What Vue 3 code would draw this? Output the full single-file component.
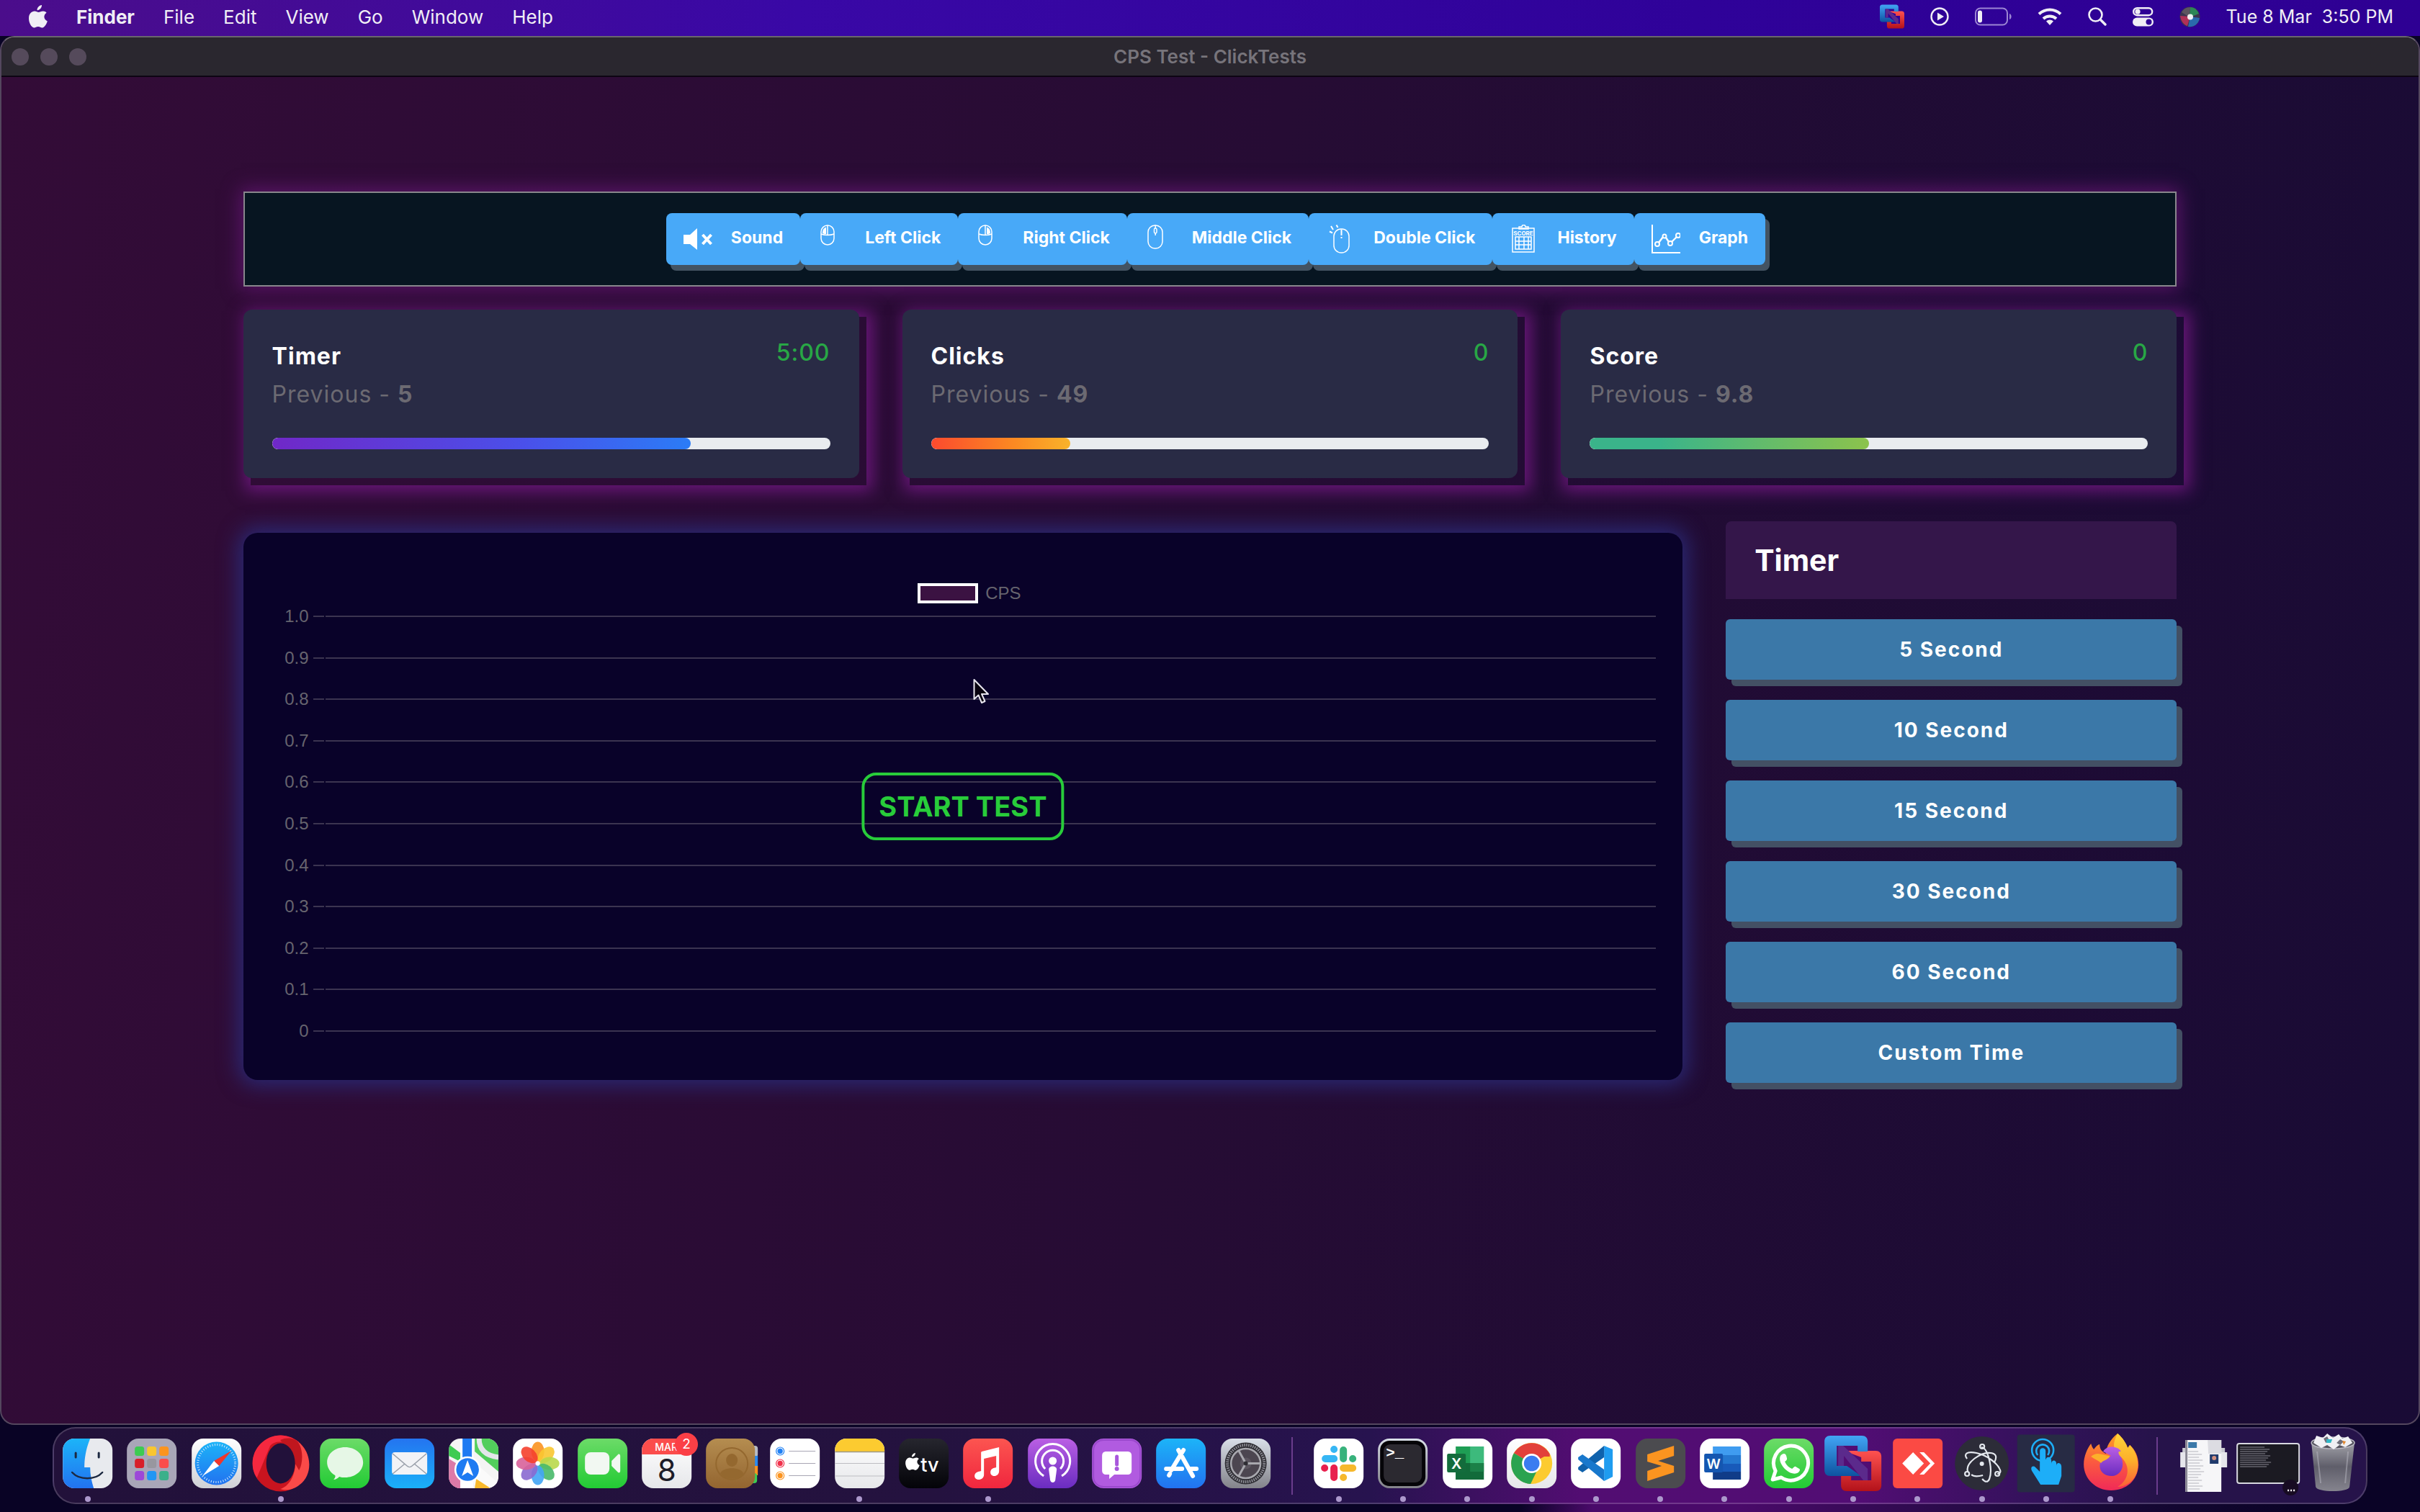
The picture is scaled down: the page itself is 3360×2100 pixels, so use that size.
<template>
  <div class="desktop">
    <svg class="defs" width="0" height="0" aria-hidden="true" v-html="defs"></svg>

    <header class="menubar">
      <nav class="menus">
        <button class="apple" aria-label="Apple menu">
          <svg width="26" height="32" viewBox="0 0 26 32" fill="#f0eef5" v-html="applePath"></svg>
        </button>
        <button v-for="(m, i) in menus" :key="m" :class="{ strong: i === 0 }">{{ m }}</button>
      </nav>
      <div class="status">
        <svg width="34" height="34" viewBox="-5 -5 79 79" v-html="icons.vmware"></svg>
        <svg width="26" height="26" viewBox="0 0 26 26">
          <circle cx="13" cy="13" r="11.5" fill="none" stroke="#f0eef5" stroke-width="2.4" />
          <path d="M10 7.5v11l9-5.5z" fill="#f0eef5" />
        </svg>
        <svg width="51" height="26" viewBox="0 0 51 26">
          <rect x="1" y="1.500" width="44" height="23" rx="6.500" fill="none" stroke="#9c86d3" stroke-width="2" />
          <rect x="4" y="4.500" width="6" height="17" rx="3" fill="#f0eef5" />
          <path d="M48 9c3.500 1 3.500 7 0 8z" fill="#9c86d3" />
        </svg>
        <svg width="34" height="26" viewBox="0 0 34 26" fill="none" stroke="#f0eef5" stroke-width="4">
          <path d="M2 9.500a21.500 21.500 0 0 1 30 0" />
          <path d="M8 16a13 13 0 0 1 18 0" />
          <path d="M17 25l-5-5.500a7.500 7.500 0 0 1 10 0z" fill="#f0eef5" stroke="none" />
        </svg>
        <svg width="26" height="26" viewBox="0 0 26 26" fill="none" stroke="#f0eef5" stroke-linecap="round">
          <circle cx="10.500" cy="10.500" r="9" stroke-width="2.600" />
          <path d="M17.500 17.500l6.500 6.500" stroke-width="3.400" />
        </svg>
        <svg width="29" height="28" viewBox="0 0 29 28">
          <rect x="1.200" y="2.200" width="26" height="10" rx="5" fill="none" stroke="#f0eef5" stroke-width="2.400" />
          <circle cx="7" cy="7.200" r="3.600" fill="#f0eef5" />
          <rect x="0" y="15.500" width="29" height="12" rx="6" fill="#f0eef5" />
          <circle cx="22.500" cy="21.500" r="4" fill="#2f0096" />
        </svg>
        <svg width="29" height="29" viewBox="0 0 29 29">
          <circle cx="14.500" cy="14.500" r="14" fill="#3a3450" />
          <path d="M3 8a13.500 13.500 0 0 1 12-7l-1 14z" fill="#5c5460" />
          <path d="M15 1a13.500 13.500 0 0 1 12 9l-13 5z" fill="#2c8656" />
          <path d="M1 13c1 8 6 13 10 14l4-13z" fill="#b03058" />
          <path d="M12 28c8 1 15-4 16-12l-13-2z" fill="#2a6aac" />
          <circle cx="15" cy="14.500" r="4" fill="#ffffff" opacity="0.9" />
        </svg>
        <div class="clock"><span>Tue 8 Mar</span><span>3:50 PM</span></div>
      </div>
    </header>

    <section class="window">
      <div class="titlebar">
        <div class="lights">
          <button aria-label="Close"></button>
          <button aria-label="Minimize"></button>
          <button aria-label="Zoom"></button>
        </div>
        <h1>CPS Test - ClickTests</h1>
      </div>

      <main class="content">
        <div class="toolbar">
          <button v-for="t in tools" :key="t.label" class="tool">
            <svg width="40" height="40" viewBox="0 0 40 40" v-html="t.icon"></svg>
            <span>{{ t.label }}</span>
          </button>
        </div>

        <div class="grid">
          <div v-for="s in stats" :key="s.name" class="glow">
            <article class="card">
              <div class="card-head">
                <h2>{{ s.name }}</h2>
                <span class="value">{{ s.value }}</span>
              </div>
              <p>Previous - <b>{{ s.previous }}</b></p>
              <div class="track" role="progressbar" :aria-valuenow="s.percent">
                <div class="fill" :class="s.tone" :style="{ width: s.percent + '%' }"></div>
              </div>
            </article>
          </div>
        </div>

        <div class="grid lower">
          <section class="chart">
            <div class="legend"><i></i>CPS</div>
            <div class="plot">
              <div v-for="n in ticks" :key="n" class="row">
                <span>{{ n }}</span>
                <i class="tick"></i>
                <i class="line"></i>
              </div>
            </div>
            <button class="start">START TEST</button>
            <svg class="pointer" width="24" height="36" viewBox="0 0 24 36">
              <path d="M1.500 2v27l6-5.500 4.500 10.500 4.500-2-4.500-10h9z" fill="#08020f" stroke="#e8e6ee" stroke-width="2" stroke-linejoin="round" />
            </svg>
          </section>

          <aside class="side">
            <h2>Timer</h2>
            <button v-for="d in durations" :key="d">{{ d }}</button>
          </aside>
        </div>
      </main>
    </section>

    <footer class="dock-area">
      <div class="dock">
        <template v-for="(group, g) in dock" :key="g">
          <span v-if="g" class="sep"></span>
          <button v-for="app in group" :key="app.name" class="app" :aria-label="app.name">
            <svg viewBox="-10 -10 89 89" v-html="icons[app.name]"></svg>
            <span v-if="app.badge" class="badge">{{ app.badge }}</span>
            <i v-if="app.open" class="dot"></i>
          </button>
        </template>
      </div>
    </footer>
  </div>
</template>

<script setup>
const menus = ['Finder', 'File', 'Edit', 'View', 'Go', 'Window', 'Help']

const applePath = '<path d="M18 0c.4 3.600-3 7.400-6.400 7.200C11.200 3.800 14.600.4 18 0zM24.600 10.800c-4.800 3-4 9.400 1.200 11.600-1.200 3.600-4 8.800-7 9-2.400.2-3-1.400-5.800-1.400s-3.600 1.400-5.800 1.400C3.400 31 0 24.200 0 18.400 0 12 4 8.600 8 8.600c2.400 0 4 1.400 5.600 1.400 1.400 0 3.600-1.600 6.400-1.600 1.600 0 3.600.8 4.600 2.400z"/>'

// toolbar
const mouse = (body) => `<g fill="none" stroke="#fff" stroke-width="1.500">${body}</g>`
const tools = [
  {
    label: 'Sound',
    icon: '<path d="M0 14h9L19 5v30L9 27H0z" fill="#fff"/><path d="M26.500 14l12 13m0-13l-12 13" stroke="#fff" stroke-width="4"/>',
  },
  {
    label: 'Left Click',
    icon: mouse('<rect x="5" y="1" width="18" height="27" rx="9"/><path d="M5 13c5 2 13 2 18 0M14 1v13"/><path d="M12 3.500C8 5 7 8 7 12c2 1 3 1 5 1z" fill="#fff" stroke="none"/>'),
  },
  {
    label: 'Right Click',
    icon: mouse('<rect x="5" y="1" width="18" height="27" rx="9"/><path d="M5 13c5 2 13 2 18 0M14 1v13"/><path d="M16 3.500c4 1.500 5 4.500 5 8.500-2 1-3 1-5 1z" fill="#fff" stroke="none"/>'),
  },
  {
    label: 'Middle Click',
    icon: mouse('<rect x="5" y="1" width="20" height="32" rx="9.500"/><rect x="13.500" y="5" width="3.500" height="7" rx="1.700"/><path d="M15.200 1v4m0 7v3"/>'),
  },
  {
    label: 'Double Click',
    icon: mouse('<rect x="11" y="6" width="21" height="33" rx="10"/><path d="M21.500 7v8m0 2v2M7 2l3 5M14.500 0.500l2 3.500M5 9.500l4 2" stroke-width="2"/>'),
  },
  {
    label: 'History',
    icon: mouse('<path d="M4 5h30v33H4zM13 5V3h4a2.500 2.500 0 0 1 5 0h4v3H13zM8 17h22v17H8zM8 23h22M8 28h22M13 17v17M20 17v17M26 17v17"/><text x="19" y="14.500" text-anchor="middle" font-family="Inter,sans-serif" font-size="8" font-weight="700" fill="#fff" stroke="none">SCORE</text>'),
  },
  {
    label: 'Graph',
    icon: '<g fill="none" stroke="#fff" stroke-width="2"><path d="M1 0v39h39"/><path d="M10 25l6-8M20 18l4 6M28 24l7-7" stroke-width="2.400"/><circle cx="8" cy="27" r="3"/><circle cx="18" cy="16" r="2.500"/><circle cx="26" cy="26" r="3"/><circle cx="37" cy="15" r="3"/></g>',
  },
]

const stats = [
  { name: 'Timer', value: '5:00', previous: '5', percent: 75, tone: 'violet' },
  { name: 'Clicks', value: '0', previous: '49', percent: 25, tone: 'orange' },
  { name: 'Score', value: '0', previous: '9.8', percent: 50, tone: 'green' },
]

const ticks = ['1.0', '0.9', '0.8', '0.7', '0.6', '0.5', '0.4', '0.3', '0.2', '0.1', '0']
const durations = ['5 Second', '10 Second', '15 Second', '30 Second', '60 Second', 'Custom Time']

// dock
const dock = [
  [
    { name: 'finder', open: true }, { name: 'launchpad' }, { name: 'safari' },
    { name: 'opera', open: true }, { name: 'messages' }, { name: 'mail' },
    { name: 'maps' }, { name: 'photos' }, { name: 'facetime' },
    { name: 'calendar', badge: 2 }, { name: 'contacts' }, { name: 'reminders' },
    { name: 'notes', open: true }, { name: 'tv' }, { name: 'music', open: true },
    { name: 'podcasts' }, { name: 'feedback' }, { name: 'appstore' }, { name: 'settings' },
  ],
  [
    { name: 'slack', open: true }, { name: 'terminal', open: true }, { name: 'excel', open: true },
    { name: 'chrome', open: true }, { name: 'vscode', open: true }, { name: 'sublime', open: true },
    { name: 'word', open: true }, { name: 'whatsapp', open: true }, { name: 'vmware', open: true },
    { name: 'anydesk', open: true }, { name: 'electron', open: true }, { name: 'clicktests', open: true },
    { name: 'firefox', open: true },
  ],
  [{ name: 'document' }, { name: 'minimized' }, { name: 'trash' }],
]

const grad = (id, ...colors) =>
  `<linearGradient id="${id}" x1="0" y1="0" x2="0" y2="1">${colors
    .map((c, i) => `<stop offset="${i / (colors.length - 1)}" stop-color="${c}"/>`)
    .join('')}</linearGradient>`

const defs = `<defs>
  ${grad('gBlue', '#1cb4f8', '#2272f0')}
  ${grad('gMail', '#2474f0', '#1ab0f8')}
  ${grad('gGreen', '#6cdb68', '#22cb34')}
  ${grad('gWhite', '#ffffff', '#cfd0d6')}
  ${grad('gPaper', '#ffffff', '#e6e7ea')}
  ${grad('gRed', '#fc5550', '#f0263e')}
  ${grad('gPurple', '#ba5fe4', '#6a2cc0')}
  ${grad('gBlack', '#26262e', '#030308')}
  ${grad('gGray', '#d9dfe8', '#83838a')}
  ${grad('gBrown', '#b58d50', '#936530')}
  ${grad('gVmB', '#42a5f5', '#0d53a0')}
  ${grad('gVmR', '#ff5250', '#b3121a')}
  ${grad('gFox', '#fca420', '#fb5a40', '#f02a58')}
  ${grad('gFlame', '#ffd43a', '#fcb02a', '#fb6038')}
  ${grad('gTrash', '#a3a3aa', '#5f5e6a', '#85848e')}
  <clipPath id="tile"><rect width="69" height="69" rx="16"/></clipPath>
</defs>`

const tile = (fill) => `<rect width="69" height="69" rx="16" fill="${fill}"/>`
const repeat = (n, fn) => Array.from({ length: n }, (_, i) => fn(i)).join('')

const padColors = ['#3dcb52', '#f9c631', '#fb9420', '#d81f2a', '#98979f', '#fb4d4c', '#9c48d8', '#2196f3', '#3bb08a']
const petals = ['#fb9420', '#f9c631', '#b9d84a', '#48b96a', '#42a5f5', '#8a6ad0', '#d8629a', '#f5402e']

const icons = {
  finder: `${tile('#e8eaee')}<g clip-path="url(#tile)"><path d="M0 0h38c-5 12-8 26-8 40h8c0 10 2 20 5 29H0z" fill="url(#gBlue)"/></g>
    <path d="M18 20v6M50 20v6" stroke="#1c2840" stroke-width="3" stroke-linecap="round"/><path d="M13 47c10 11 32 11 42 0" fill="none" stroke="#1c2840" stroke-width="2.500" stroke-linecap="round"/>`,
  launchpad: `${tile('#a9a6b8')}${repeat(9, (i) => `<rect x="${11 + (i % 3) * 17}" y="${11 + Math.floor(i / 3) * 17}" width="13" height="13" rx="3.500" fill="${padColors[i]}"/>`)}`,
  safari: `${tile('url(#gWhite)')}<circle cx="34.500" cy="34.500" r="30" fill="url(#gBlue)"/><circle cx="34.500" cy="34.500" r="26" fill="none" stroke="#cfe8fb" stroke-width="3" stroke-dasharray="1 2.400"/>
    <path d="M55 17L38 38l-7-7z" fill="#f0362c"/><path d="M15 52l16-21 7 7z" fill="#fff"/>`,
  opera: `<ellipse cx="34.500" cy="34.500" rx="39" ry="39" fill="#c8141f"/><path d="M34.500-4.500C13-4.500-4.500 13-4.500 34.500c0 8 2 14 6 20L20 10C26 3 40 2 50 12L60 5C52-1 44-4.500 34.500-4.500z" fill="#f5283f"/>
    <path d="M58 4c20 14 22 46 3 60-8 7-20 9-27 6 22-6 30-50 8-66z" fill="#fb4a48"/><path d="M34 2c10-5 20-2 24 2 8 10 8 30 2 40L40 10z" fill="#c0161e"/><ellipse cx="34.500" cy="34.500" rx="20" ry="28" fill="#22113a"/>`,
  messages: `${tile('url(#gGreen)')}<path d="M35 12c14 0 25 9 25 21S49 54 35 54c-3 0-6 0-8-1-2 2-5 4-8 4 2-2 3-4 2-6-7-4-11-11-11-18 0-12 11-21 25-21z" fill="#e6f7e6"/>`,
  mail: `${tile('url(#gMail)')}<rect x="10" y="19" width="49" height="31" rx="4" fill="#f2f3f6"/><path d="M11 21l20 17c2 2 5 2 7 0l20-17M11 49l17-14M58 49L41 35" fill="none" stroke="#9aa0aa" stroke-width="1.500"/>`,
  maps: `<g clip-path="url(#tile)"><rect width="69" height="69" fill="#f4f4f4"/><path d="M36 0h33v46L36 18z" fill="#52ce5c"/><path d="M0 8l16 12v12L0 24z" fill="#3dcb52"/><path d="M0 28l16 10v31H0z" fill="#dc7aa8"/>
    <path d="M42 0c0 16 10 24 27 26" fill="none" stroke="#e4e6ea" stroke-width="7"/><path d="M16 0h18v69H16z" fill="#fff"/><path d="M19 0h13v34H19z" fill="#1f7bf2"/><path d="M32 30l37 32v7H40l-8-10z" fill="#fafafa"/><path d="M38 56l20 13H36z" fill="#f9b92c"/><path d="M0 69V52l14 17z" fill="#dc7aa8"/></g>
    <circle cx="26" cy="43" r="17" fill="#1f7bf2" stroke="#fff" stroke-width="2.500"/><path d="M26 30l8 22-8-5-8 5z" fill="#fff"/>`,
  photos: `${tile('#ffffff')}${repeat(8, (i) => `<ellipse cx="34.500" cy="18" rx="9" ry="13.500" fill="${petals[i]}" opacity="0.9" transform="rotate(${i * 45} 34.500 34.500)"/>`)}`,
  facetime: `${tile('url(#gGreen)')}<rect x="10" y="19" width="34" height="31" rx="8" fill="#f2f8f2"/><path d="M47 31l9-9c1.500-1 3 0 3 2v21c0 2-1.500 3-3 2l-9-9z" fill="#f2f8f2"/>`,
  calendar: `${tile('url(#gPaper)')}<g clip-path="url(#tile)"><rect width="69" height="22" fill="#fb4d4c"/></g><text x="34" y="17" text-anchor="middle" font-family="Inter,sans-serif" font-size="14" font-weight="500" fill="#fff">MAR</text><text x="34.500" y="59" text-anchor="middle" font-family="Inter,sans-serif" font-size="42" fill="#1c1c28">8</text>`,
  contacts: `<rect x="50" y="10" width="22" height="16" rx="4" fill="#b8bcc4"/><rect x="50" y="24" width="22" height="15" fill="#2a8af0"/><rect x="50" y="38" width="22" height="13" fill="#fb9420"/><rect x="50" y="48" width="21" height="14" rx="4" fill="#3dcb52"/><rect width="68" height="69" rx="16" fill="url(#gBrown)"/>
    <circle cx="36" cy="35" r="22" fill="none" stroke="#94682f" stroke-width="2"/><ellipse cx="36" cy="30" rx="8" ry="9" fill="#94682f"/><path d="M20 48c4-9 28-9 32 0-6 10-26 10-32 0z" fill="#94682f"/>`,
  reminders: `${tile('#ffffff')}${repeat(3, (i) => `<circle cx="14" cy="${17.5 + i * 17}" r="5.500" fill="none" stroke="${['#2080f4', '#f0304a', '#fb9420'][i]}" stroke-width="1.200"/><circle cx="14" cy="${17.5 + i * 17}" r="3.700" fill="${['#2080f4', '#f0304a', '#fb9420'][i]}"/><path d="M26 ${17.5 + i * 17}h37" stroke="#a8a6b4" stroke-width="1.200"/>`)}`,
  notes: `${tile('url(#gPaper)')}<g clip-path="url(#tile)"><rect width="69" height="18" fill="#fccb30"/><path d="M0 18.500h69" stroke="#9c9888" stroke-width="1.500"/><path d="M0 34.500h69M0 52h69" stroke="#bdbdc2"/></g>`,
  tv: `${tile('url(#gBlack)')}<g transform="translate(9 20) scale(0.76)" fill="#fff">${applePath}</g><text x="30" y="46" font-family="Inter,sans-serif" font-size="27" font-weight="500" fill="#fff">tv</text>`,
  music: `${tile('url(#gRed)')}<path d="M26 18l24-6v33c0 9-12 9-12 2 0-5 4-6 8-7V24l-17 4v22c0 9-13 9-13 2 0-5 5-6 9-7V19z" fill="#fff"/>`,
  podcasts: `${tile('url(#gPurple)')}<g fill="none" stroke="#fff" stroke-width="3"><path d="M22 52a24 24 0 1 1 25 0"/><path d="M24 42a15 15 0 1 1 21 0"/></g><circle cx="34.500" cy="31" r="5.500" fill="#fff"/><path d="M29 43c0-6 11-6 11 0l-2 15c-1 4-6 4-7 0z" fill="#fff"/>`,
  feedback: `${tile('#b15be0')}<rect x="2" y="2" width="65" height="65" rx="14" fill="none" stroke="#9a48cc" stroke-width="2"/><path d="M20 18h29c4 0 6 2 6 6v20c0 4-2 6-6 6H31l-7 6v-6h-4c-4 0-6-2-6-6V24c0-4 2-6 6-6z" fill="#fff"/><path d="M34.500 25v11" stroke="#a856dc" stroke-width="5" stroke-linecap="round"/><circle cx="34.500" cy="42" r="3" fill="#a856dc"/>`,
  appstore: `${tile('url(#gBlue)')}<g stroke="#fff" stroke-width="6" stroke-linecap="round"><path d="M38 16L21 44M31 16l20 36M14 42h22M49 42h7M19 49l-1 2"/></g>`,
  settings: `${tile('url(#gGray)')}<circle cx="34.500" cy="34.500" r="29" fill="#2e2d33"/><circle cx="34.500" cy="34.500" r="25.500" fill="none" stroke="#8e8e96" stroke-width="4" stroke-dasharray="1.600 1.400"/><circle cx="34.500" cy="34.500" r="20.500" fill="#4c4650" stroke="#a8a8ae" stroke-width="2.500"/><circle cx="34.500" cy="34.500" r="8" fill="#5c5660"/><path d="M34.500 34.500H55M34.500 34.500l-10-18M34.500 34.500l-10 18" stroke="#a8a8ae" stroke-width="3"/><circle cx="34.500" cy="34.500" r="3" fill="#2e2d33"/>`,
  slack: `${tile('#ffffff')}<g stroke-width="10" stroke-linecap="round"><path d="M28 15v0M16 28h12" stroke="#36b6f4"/><path d="M41 16v12M54 28v0" stroke="#38b27c"/><path d="M54 41v0M41 41h13M41 54v0" stroke="#f6b82c"/><path d="M28 41v13M15 41v0" stroke="#e8204e"/></g>`,
  terminal: `${tile('url(#gGray)')}<rect x="3" y="3" width="63" height="63" rx="13" fill="#050408"/><rect x="8" y="8" width="53" height="53" rx="9" fill="#2b2930"/><text x="11" y="26" font-family="Liberation Mono,monospace" font-size="21" font-weight="700" fill="#fff">&gt;_</text>`,
  excel: `${tile('#ffffff')}<path d="M18 11h39v46H18z" fill="#1e9e54"/><path d="M38 11h19v23H38z" fill="#3dba7c"/><path d="M18 34h39v23H18z" fill="#126b3a"/><path d="M38 34h19v12H38z" fill="#1b8048"/><rect x="6" y="21" width="26" height="26" rx="2" fill="#136c3c"/><text x="19" y="41.500" text-anchor="middle" font-family="Inter,sans-serif" font-size="20" font-weight="600" fill="#fff">X</text>`,
  chrome: `${tile('url(#gPaper)')}<circle cx="34.500" cy="34.500" r="28.500" fill="#fccb30"/><path d="M34.500 34.500L9.800 20.300A28.500 28.500 0 0 1 59.200 21z" fill="#e2403a"/><path d="M34.500 34.500L9.800 20.300a28.500 28.500 0 0 0 23.200 42.700l11-23z" fill="#2aa350"/><path d="M34.500 21h25v4h-25z" fill="#e2403a"/><circle cx="34.500" cy="34.500" r="13.500" fill="#fff"/><circle cx="34.500" cy="34.500" r="10.800" fill="#3b7cf0"/>`,
  vscode: `${tile('#ffffff')}<path d="M46 10l12 5v38l-12 6z" fill="#1f9cf0"/><path d="M46 10v16L16 47l-6-4V40z" fill="#0f62ac"/><path d="M46 59V43L16 22l-6 4v3z" fill="#1878cc"/>`,
  sublime: `${tile('#4b4b4f')}<path d="M16 22l37-12v14L31 31l22 7v9L16 59V45l20-7-20-6z" fill="#fb9420"/>`,
  word: `${tile('#ffffff')}<path d="M18 11h39v12H18z" fill="#3f9cf0"/><path d="M18 23h39v12H18z" fill="#2478d0"/><path d="M18 35h39v11H18z" fill="#185aba"/><path d="M18 46h39v11H18z" fill="#103c88"/><rect x="6" y="21" width="26" height="26" rx="2" fill="#1456b0"/><text x="19" y="41.500" text-anchor="middle" font-family="Inter,sans-serif" font-size="19" font-weight="600" fill="#fff">W</text>`,
  whatsapp: `${tile('url(#gGreen)')}<path d="M12 57l4-12a24 24 0 1 1 8 9z" fill="none" stroke="#fff" stroke-width="5" stroke-linejoin="round"/><path d="M25 22c3-2 5-1 6 2l1 4c0 2-2 3-3 4 2 5 5 8 10 10 2-1 3-4 5-3l5 3c2 1 0 5-3 6-10 4-24-10-24-20 0-3 1-5 3-6z" fill="#fff"/>`,
  vmware: `<path d="M22 17h44c5 0 8 3 8 8v40c0 5-3 8-8 8H26c-5 0-8-3-8-8V51h14v7h28V32H46v-6z" fill="url(#gVmR)"/><path d="M3-4h44c5 0 8 3 8 8v14L41 18v-8H12v28h14l20 14H3c-5 0-8-3-8-8V4c0-5 3-8 8-8z" fill="url(#gVmB)"/><path d="M14 10h7l34 32v16h-6L22 24v14h-8z" fill="#5b2a8c"/>`,
  anydesk: `<rect width="69" height="69" rx="6" fill="#fb4a44"/><path d="M28 19l15 15.500L28 50 13 34.500z" fill="#fff"/><path d="M37 19h6l15 15.500L43 50h-6l15-15.500z" fill="#fff"/>`,
  electron: `<circle cx="34.500" cy="34.500" r="37.500" fill="#2c2c38"/><g fill="none" stroke="#e4e8ee" stroke-width="2.200"><path d="M14 28c-5-6-1-11 13-8 15 3 30 15 33 24 1 3-1 5-4 5M34 12c9 1 16 30 11 44-2 5-6 5-10 0M15 46c-4-12 18-28 32-26 7 1 9 5 5 13M20 50c3 3 9 3 16 1"/><circle cx="35" cy="11" r="3"/><circle cx="14" cy="49" r="3"/><circle cx="56" cy="49" r="3"/></g><circle cx="34.500" cy="35" r="3" fill="#e4e8ee"/>`,
  clicktests: `<rect x="-5.500" y="-5.500" width="80" height="80" rx="4" fill="#272b44"/><g fill="none" stroke="#1daef8" stroke-width="2.600"><circle cx="30" cy="16" r="15"/><path d="M23 23a9 9 0 1 1 14 0"/></g><path d="M26 18c0-5 8-5 8 0v14c0-7 8-7 8 0v4c0-6 7-6 7 0v3c0-6 7-5 7 1v13l-4 12H27L15 46c-3-6 2-8 5-5l6 6z" transform="translate(0 -1)" fill="#1daef8"/>`,
  firefox: `<path d="M44-7c8 7 12 14 14 20l3-4c8 7 12 17 12 28C72 58 56 72 35 72S-3 56-3 36C-3 24 2 14 7 7c1 3 2 6 4 8 3-4 6-7 8-7 0 7 4 11 9 13 0-10 6-20 16-28z" fill="url(#gFox)"/><path d="M44-7c8 7 12 14 14 20l3-4c10 10 14 26 9 40-5 12-16 18-26 18 16-10 18-28 6-40C40 18 34 12 44-7z" fill="url(#gFlame)"/><path d="M24 18c5-9 20-8 25 0-6-1-4 4 0 8 6 14-2 26-13 26-14 0-21-11-14-23l13-5z" fill="url(#gPurple)"/><path d="M7 25c8-8 16-2 26-1 0 5-10 6-12 10-4-4-9-5-14-9z" fill="#fcb02a"/>`,
  document: `<path d="M5 13h59v27H5z" fill="#c8c8d0"/><path d="M2 19h65v21H2z" fill="#e6e6ec"/><path d="M9 2h50v72H9z" fill="#f6f6f8"/><path d="M9 2h3v72H9z" fill="#8a8894"/><path d="M13 5h12v8H13z" fill="#3b78a8"/><path d="M40 2h19v19H41z" fill="#dcdce2"/><path d="M43 22h12v13H43z" fill="#203a6c"/><circle cx="49" cy="27" r="3" fill="#d09080"/>${repeat(14, (i) => `<path d="M13 ${18 + i * 4}h${14 + ((i * 5) % 9)}" stroke="#b4b4bc"/>`)}`,
  minimized: `<rect x="-8" y="7" width="86" height="55" rx="3" fill="#1b1a22" stroke="#d8d8e0" stroke-width="2"/>${repeat(10, (i) => `<path d="M-4 ${12 + i * 3}h${34 + ((i * 7) % 10)}" stroke="#8a8892" stroke-width="1"/>`)}<circle cx="66" cy="68" r="11" fill="#170b22"/><path d="M62 72h10" stroke="#fff" stroke-width="2.400" stroke-dasharray="2 2"/>`,
  trash: `<path d="M5 5h60l-7 62c-1 8-45 8-47 0z" fill="url(#gTrash)"/><path d="M13 18l5 44M56 18l-4 44" stroke="#b9b8c2" stroke-width="2" opacity="0.5"/><ellipse cx="35" cy="6" rx="30" ry="8" fill="#55545f" stroke="#b9b8c2" stroke-width="1.500"/><path d="M8 6l4-10 9 3 6-6 8 6 8-5 5 6 8-3 6 9-10 6-8-3-8 6-9-6-8 4z" fill="#f0f0f4"/><path d="M22 0l5-3 3 6-5 3zM40 6l5-5 5 3-5 5z" fill="#70707c"/><path d="M26 1h8l-2 5h-6z" fill="#30b8c8"/><path d="M48 3l5 1-3 5z" fill="#e08830"/>`,
}
</script>

<style>
body {
  margin: 0;
  background: #090325;
}
</style>

<style scoped>
.desktop {
  min-height: 100vh;
  display: flex;
  flex-direction: column;
  font-family: Inter, "Liberation Sans", sans-serif;
  background: #090325;
}

.defs {
  position: absolute;
}

button {
  margin: 0;
  padding: 0;
  border: 0;
  background: none;
  color: inherit;
  font: inherit;
}

h1,
h2,
p {
  margin: 0;
}

/* menu bar */
.menubar {
  height: 50px;
  display: flex;
  justify-content: space-between;
  padding: 0 37px 0 40px;
  box-sizing: border-box;
  background: linear-gradient(90deg, #4b0d8b, #3908a6 33%, #2f0299 70%, #2e0093);
  color: #f0eef5;
  font-size: 26px;
}

.menus,
.status {
  height: 46px;
  display: flex;
  align-items: center;
}

.menus {
  gap: 40px;
}

.menus svg {
  display: block;
}

.strong {
  font-weight: 700;
}

.status {
  gap: 36px;
}

.clock {
  display: flex;
  gap: 14px;
  font-size: 25px;
}

/* app window */
.window {
  flex: 1;
  margin-bottom: 3px;
  box-sizing: border-box;
  border: 2px solid #54475e;
  border-top-color: #69666d;
  border-radius: 20px;
  overflow: hidden;
  background: linear-gradient(97deg, #330c37, #260c34 50%, #190b35);
}

.titlebar {
  height: 53px;
  display: grid;
  grid-template-columns: 1fr auto 1fr;
  align-items: center;
  padding: 0 14px;
  border-bottom: 2px solid #0d0513;
  background: #2a272f;
}

.titlebar h1 {
  font-size: 26px;
  line-height: 32px;
  font-weight: 600;
  color: #77747b;
}

.lights {
  display: flex;
  gap: 16px;
}

.lights button {
  width: 24px;
  height: 24px;
  border-radius: 50%;
  background: #554a5b;
}

.content {
  width: 80%;
  margin: 0 auto;
  padding-top: 159px;
}

.toolbar {
  display: flex;
  justify-content: center;
  padding: 28px 0 28px 16px;
  margin-bottom: 32px;
  border: 2px solid #88868c;
  background: #071521;
  box-shadow: 0 0 24px 4px #5a1468;
}

.tool {
  height: 72px;
  display: flex;
  align-items: center;
  gap: 26px;
  padding: 0 24px;
  border-radius: 8px;
  background: #48a9f8;
  box-shadow: 6px 8px 0 #435362;
  color: #fff;
  font-size: 23px;
  font-weight: 700;
}

.tool span {
  padding-bottom: 4px;
}

/* cards */
.grid {
  display: grid;
  grid-template-columns: repeat(12, 1fr);
  gap: 60px;
}

.glow {
  grid-column: span 4;
  position: relative;
  top: 10px;
  left: 10px;
  box-shadow: 0 0 22px 8px #6a177a;
}

.card {
  position: relative;
  top: -10px;
  left: -10px;
  padding: 40px;
  border-radius: 12px;
  background: #292b45;
  font-size: 32px;
  letter-spacing: 1px;
}

.card-head {
  display: flex;
  justify-content: space-between;
}

.card h2 {
  font-size: 32px;
  line-height: 50px;
  color: #fff;
}

.value {
  line-height: 40px;
  font-weight: 500;
  color: #28a745;
}

.card p {
  line-height: 56px;
  color: #6c6a72;
}

.track {
  height: 16px;
  margin-top: 32px;
  border-radius: 8px;
  overflow: hidden;
  background: #e9ecef;
}

.fill {
  height: 100%;
  border-radius: 8px;
}

.violet {
  background: linear-gradient(90deg, #7028c8, #4a50ea 60%, #2b7cf6);
}

.orange {
  background: linear-gradient(90deg, #fc4a2e, #fc8a22 60%, #f9b32a);
}

.green {
  background: linear-gradient(90deg, #3ab48a 25%, #8cc34c);
}

/* chart and timer list */
.lower {
  margin-top: 60px;
  align-items: start;
}

.chart {
  grid-column: span 9;
  position: relative;
  margin-top: 16px;
  padding: 70px 37px 56px 47px;
  border-radius: 20px;
  background: #090229;
  box-shadow: 0 0 28px 8px #2a2872;
  font-family: "Liberation Sans", sans-serif;
  font-size: 24px;
  line-height: 24px;
  color: #66646e;
}

.legend {
  display: flex;
  justify-content: center;
  align-items: center;
  gap: 10px;
  height: 28px;
  margin-bottom: 6px;
  padding-left: 8px;
}

.legend i {
  width: 76px;
  height: 20px;
  border: 4px solid #fff;
  background: #3b1242;
}

.plot {
  height: 600px;
  display: flex;
  flex-direction: column;
  justify-content: space-between;
}

.row {
  display: flex;
  align-items: center;
}

.row span {
  width: 44px;
  margin-right: 6px;
  text-align: right;
}

.tick,
.line {
  height: 2px;
  background: #3b3450;
}

.tick {
  width: 15px;
  margin-right: 2px;
}

.line {
  flex: 1;
}

.start {
  position: absolute;
  top: 50%;
  left: 50%;
  transform: translate(-50%, -50%);
  padding: 19px 20px;
  border: 4px solid #28cc3a;
  border-radius: 20px;
  color: #28cc3a;
  font-family: Inter, sans-serif;
  font-size: 38px;
  font-weight: 700;
  line-height: 48px;
  white-space: nowrap;
}

.pointer {
  position: absolute;
  top: 202px;
  left: calc(50% + 14px);
}

.side {
  grid-column: span 3;
  display: flex;
  flex-direction: column;
  gap: 28px;
}

.side h2 {
  padding: 0 40px;
  border-radius: 8px 8px 0 0;
  background: #34164a;
  color: #fff;
  font-size: 41px;
  line-height: 108px;
}

.side button {
  height: 84px;
  border-radius: 6px;
  background: #3b78a8;
  box-shadow: 8px 9px 0 #435064;
  color: #fff;
  font-size: 28px;
  font-weight: 700;
  letter-spacing: 2px;
}

/* dock */
.dock-area {
  padding: 0 73px 11px;
  background: linear-gradient(100deg, #090325 63%, #4a0a6a 66%, #4a0a6a 72%, #1d0a3d 84%, #0a0326 95%);
}

.dock {
  height: 107px;
  display: flex;
  box-sizing: border-box;
  padding: 4px 2px 0;
  border: 2px solid rgba(255, 255, 255, 0.18);
  border-radius: 32px;
  background: linear-gradient(90deg, #22113a, #24123f 38%, #27134f 57%, #520d72 66%, #520d74 78%, #32125a 86%, #26134a 91%, #26134a);
}

.app {
  position: relative;
  flex: 1;
  height: 89px;
}

.app svg {
  display: block;
  width: 100%;
  height: 89px;
}

.sep {
  width: 2px;
  height: 80px;
  margin: 8px 19px 0;
  background: #6a3c8c;
}

.dot {
  position: absolute;
  left: 50%;
  bottom: -9px;
  width: 8px;
  height: 8px;
  margin-left: -4px;
  border-radius: 50%;
  background: #ac98cc;
}

.badge {
  position: absolute;
  top: 2px;
  right: 1px;
  width: 32px;
  border-radius: 50%;
  background: #fb3f46;
  color: #fff;
  font-size: 19px;
  line-height: 32px;
}
</style>
